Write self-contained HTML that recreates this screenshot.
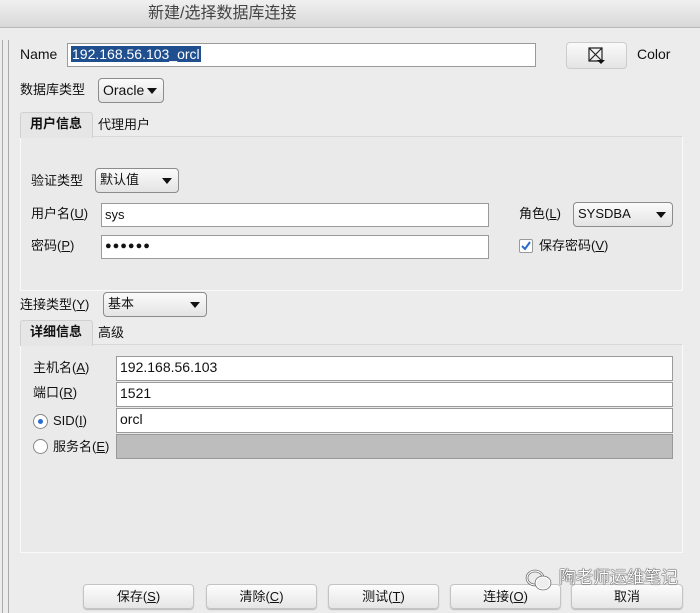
<!DOCTYPE html>
<html><head><meta charset="utf-8"><style>
*{box-sizing:border-box;margin:0;padding:0}
body{width:700px;height:613px;background:#ececec;position:relative;overflow:hidden;font-family:"Liberation Sans","Noto Sans CJK SC",sans-serif;font-size:13px;color:#111}
.a{position:absolute}
.t{position:absolute;white-space:nowrap;line-height:16px}
.in{position:absolute;background:#fff;border:1px solid #9a9a9a;padding-left:3px;line-height:21px;font-size:13px}
.dd{position:absolute;border:1px solid #8c8c8c;border-radius:4px;background:linear-gradient(#fbfbfb,#e4e4e4);padding-left:4px;line-height:22px}
.dd:after{content:"";position:absolute;right:6px;top:9px;border-left:5px solid transparent;border-right:5px solid transparent;border-top:6px solid #111}
.btn{position:absolute;top:584px;height:25px;border:1px solid #c4c4c4;border-radius:4px;background:linear-gradient(#fdfdfd,#e6e6e6);text-align:center;line-height:23px;box-shadow:0 1px 1px #bbb}
.panel{position:absolute;border:1px solid #fafafa;border-top-color:#d8d8d8;background:#eaeaea}
.tab{position:absolute;height:26px;border:1px solid #d0d0d0;border-bottom:none;border-radius:3px 3px 0 0;background:#e6e6e6;font-weight:bold;padding:3px 0 0 9px;line-height:16px}
u{text-decoration:underline}
</style></head><body>
<div class="a" style="left:0;top:0;width:700px;height:28px;background:linear-gradient(#f0f0f0,#d8d8d8);border-bottom:1px solid #b8b8b8"></div>
<div class="t" style="left:148px;top:6px;font-size:16px;color:#444">新建/选择数据库连接</div>
<div class="a" style="left:2px;top:40px;width:1px;height:573px;background:#aaa"></div>
<div class="a" style="left:8px;top:40px;width:1px;height:573px;background:#aaa"></div>

<div class="t" style="left:20px;top:46px;font-size:14px">Name</div>
<div class="in" style="left:67px;top:43px;width:469px;height:24px"><span style="background:#1f4f8f;color:#fff;padding:0 1px;font-size:14px">192.168.56.103_orcl</span></div>
<div class="a" style="left:566px;top:42px;width:61px;height:27px;border:1px solid #ccc;border-radius:4px;background:linear-gradient(#fafafa,#e4e4e4)">
<svg class="a" style="left:20px;top:3px" width="20" height="20" viewBox="0 0 20 20"><path d="M2 2h13v13H2zM2 2l13 13M15 2L2 15" stroke="#222" fill="none" stroke-width="1.2"/><path d="M10 14h8l-4 4z" fill="#111"/></svg></div>
<div class="t" style="left:637px;top:46px;font-size:14px">Color</div>

<div class="t" style="left:20px;top:82px">数据库类型</div>
<div class="dd" style="left:98px;top:78px;width:66px;height:25px;font-size:14px">Oracle</div>

<div class="panel" style="left:20px;top:136px;width:663px;height:155px"></div>
<div class="tab" style="left:20px;top:112px;width:73px">用户信息</div>
<div class="t" style="left:98px;top:117px">代理用户</div>

<div class="t" style="left:31px;top:173px">验证类型</div>
<div class="dd" style="left:95px;top:168px;width:84px;height:25px">默认值</div>
<div class="t" style="left:31px;top:206px">用户名(<u>U</u>)</div>
<div class="in" style="left:101px;top:203px;width:388px;height:24px">sys</div>
<div class="t" style="left:519px;top:206px">角色(<u>L</u>)</div>
<div class="dd" style="left:573px;top:202px;width:100px;height:25px">SYSDBA</div>
<div class="t" style="left:31px;top:238px">密码(<u>P</u>)</div>
<div class="in" style="left:101px;top:235px;width:388px;height:24px;font-size:11px;letter-spacing:1px">●●●●●●</div>
<div class="a" style="left:519px;top:239px;width:14px;height:14px;border:1px solid #999;border-radius:2px;background:#fff"><svg width="12" height="12"><path d="M2 6l3 3 5-7" stroke="#2a6bd0" stroke-width="2" fill="none"/></svg></div>
<div class="t" style="left:539px;top:238px">保存密码(<u>V</u>)</div>

<div class="t" style="left:20px;top:297px">连接类型(<u>Y</u>)</div>
<div class="dd" style="left:103px;top:292px;width:104px;height:25px">基本</div>

<div class="panel" style="left:20px;top:344px;width:663px;height:209px"></div>
<div class="tab" style="left:20px;top:320px;width:73px">详细信息</div>
<div class="t" style="left:98px;top:325px">高级</div>

<div class="t" style="left:33px;top:360px">主机名(<u>A</u>)</div>
<div class="in" style="left:116px;top:356px;width:557px;height:25px;font-size:14px">192.168.56.103</div>
<div class="t" style="left:33px;top:385px">端口(<u>R</u>)</div>
<div class="in" style="left:116px;top:382px;width:557px;height:25px;font-size:14px">1521</div>
<div class="a" style="left:33px;top:414px;width:15px;height:15px;border:1px solid #888;border-radius:50%;background:#fff"><div class="a" style="left:4px;top:4px;width:5px;height:5px;border-radius:50%;background:#2a6bd0"></div></div>
<div class="t" style="left:53px;top:413px">SID(<u>I</u>)</div>
<div class="in" style="left:116px;top:408px;width:557px;height:25px;font-size:14px">orcl</div>
<div class="a" style="left:33px;top:439px;width:15px;height:15px;border:1px solid #888;border-radius:50%;background:#fff"></div>
<div class="t" style="left:53px;top:439px">服务名(<u>E</u>)</div>
<div class="a" style="left:116px;top:434px;width:557px;height:25px;background:#bdbdbd;border:1px solid #999"></div>

<div class="btn" style="left:83px;width:111px">保存(<u>S</u>)</div>
<div class="btn" style="left:206px;width:111px">清除(<u>C</u>)</div>
<div class="btn" style="left:328px;width:111px">测试(<u>T</u>)</div>
<div class="btn" style="left:450px;width:111px">连接(<u>O</u>)</div>
<div class="btn" style="left:571px;width:112px">取消</div>
<svg class="a" style="left:525px;top:568px" width="30" height="24"><ellipse cx="10" cy="10" rx="8" ry="7" fill="none" stroke="#555" stroke-width="2.5"/><ellipse cx="10" cy="10" rx="8" ry="7" fill="none" stroke="#fff" stroke-width="1.2"/><ellipse cx="18" cy="15" rx="7" ry="6" fill="#eee" stroke="#555" stroke-width="2.5"/><ellipse cx="18" cy="15" rx="7" ry="6" fill="#eee" stroke="#fff" stroke-width="1.2"/></svg>
<div class="t" style="left:559px;top:570px;font-size:17px;color:#fff;text-shadow:0 0 1px #333,0 0 1px #333,0 0 1px #333">陶老师运维笔记</div>
</body></html>
